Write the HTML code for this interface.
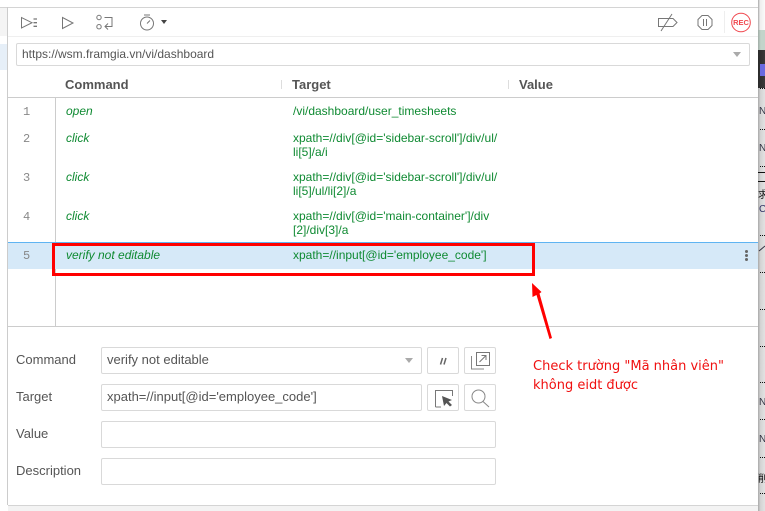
<!DOCTYPE html>
<html><head><meta charset="utf-8"><style>
html,body{margin:0;padding:0;background:#fff}
body{width:765px;height:511px;position:relative;overflow:hidden;font-family:"Liberation Sans",sans-serif}
.a{position:absolute}
.t{position:absolute;white-space:nowrap;font-size:12px;line-height:14px}
.g{color:#0f8a32}
.i{font-style:italic}
.n{color:#888;font-family:"Liberation Mono",monospace;font-size:12px;left:23px}
.h{font-size:13px;font-weight:bold;color:#555;line-height:15px}
.l{font-size:13px;color:#555;left:16px;line-height:15px}
.b{position:absolute;box-sizing:border-box;border:1px solid #d9d9d9;border-radius:2px;background:#fff;font-size:13px;color:#555;line-height:24px;padding-left:5px;white-space:nowrap}
.ln{position:absolute;background:#ccc}
</style></head><body>
<div class="a" style="left:0;top:8px;width:7px;height:28px;background:#f4f4f4"></div>
<div class="a" style="left:0;top:44px;width:7px;height:26px;background:#e6eff8"></div>
<div class="ln" style="left:0;top:7px;width:758px;height:1px;background:#d4d4d4"></div>
<div class="ln" style="left:7px;top:7px;width:1px;height:498px"></div>
<div class="ln" style="left:8px;top:36px;width:750px;height:1px;background:#efefef"></div>

<svg class="a" style="left:8px;top:8px" width="750" height="28" fill="none" stroke="#777" stroke-width="1">
<path d="M13.500 9.500V20L24 14.700Z"/><path d="M25.500 11h3.500M25.500 14.700h3.500M25.500 18.300h3.500" stroke-width="1.300"/>
<path d="M54.500 9.500V20.500L65 15Z"/>
<circle cx="91" cy="9.500" r="2.200"/><circle cx="91" cy="18.700" r="2.200"/><path d="M96.500 9.500H104V18.500H97.500M100 15.500L97 18.500L100 21.500"/>
<circle cx="139" cy="15.500" r="6.500"/><path d="M136 7h6M139 15.500l3-3"/><path d="M153 12h6l-3 4z" fill="#444" stroke="none"/>
<path d="M650.500 10.500H665L669 14.500L665 18.500H650.500Z"/><path d="M653 23L664 6"/>
<path d="M694 7.500H700L704 11.500V17.500L700 21.500H694L690 17.500V11.500Z"/><path d="M695.500 11V18M698.500 11V18"/>
<path d="M716.500 3V25" stroke="#eee"/>
<circle cx="733" cy="14.500" r="9.300" stroke="#f0484f"/>
<text x="733" y="17" text-anchor="middle" font-size="7.500" font-weight="bold" fill="#f0484f" stroke="none" font-family="Liberation Sans">REC</text>
</svg>

<div class="b" style="left:16px;top:43px;width:734px;height:23px;line-height:21px;font-size:12px;color:#555;padding-left:5px">https://wsm.framgia.vn/vi/dashboard</div>
<div class="a" style="left:733px;top:52px;border-left:4.500px solid transparent;border-right:4.500px solid transparent;border-top:5px solid #aaa"></div>

<div class="t h" style="left:65px;top:77px">Command</div>
<div class="t h" style="left:292px;top:77px">Target</div>
<div class="t h" style="left:519px;top:77px">Value</div>
<div class="ln" style="left:281px;top:80px;width:1px;height:9px;background:#ddd"></div>
<div class="ln" style="left:508px;top:80px;width:1px;height:9px;background:#ddd"></div>
<div class="ln" style="left:8px;top:97px;width:750px;height:1px"></div>
<div class="ln" style="left:55px;top:98px;width:1px;height:228px"></div>

<div class="a" style="left:8px;top:242px;width:750px;height:27px;background:#d6e9f8;border-top:1px solid #5fb4f2;box-sizing:border-box"></div>
<div class="ln" style="left:8px;top:326px;width:750px;height:1px"></div>

<div class="t n" style="top:105px">1</div>
<div class="t g i" style="left:66px;top:104px">open</div>
<div class="t g" style="left:293px;top:104px">/vi/dashboard/user_timesheets</div>
<div class="t n" style="top:132px">2</div>
<div class="t g i" style="left:66px;top:131px">click</div>
<div class="t g" style="left:293px;top:131px">xpath=//div[@id='sidebar-scroll']/div/ul/<br>li[5]/a/i</div>
<div class="t n" style="top:171px">3</div>
<div class="t g i" style="left:66px;top:170px">click</div>
<div class="t g" style="left:293px;top:170px">xpath=//div[@id='sidebar-scroll']/div/ul/<br>li[5]/ul/li[2]/a</div>
<div class="t n" style="top:210px">4</div>
<div class="t g i" style="left:66px;top:209px">click</div>
<div class="t g" style="left:293px;top:209px">xpath=//div[@id='main-container']/div<br>[2]/div[3]/a</div>
<div class="t n" style="top:249px">5</div>
<div class="t g i" style="left:66px;top:248px">verify not editable</div>
<div class="t g" style="left:293px;top:248px">xpath=//input[@id='employee_code']</div>
<div class="a" style="left:745px;top:250px;width:3px;height:3px;border-radius:50%;background:#666;box-shadow:0 4px 0 #666,0 8px 0 #666"></div>

<div class="a" style="left:52px;top:243px;width:483px;height:33px;box-sizing:border-box;border:3px solid #f00"></div>
<svg class="a" style="left:525px;top:280px" width="35" height="65" fill="#f00" stroke="none">
<path d="M7 3L7.500 17L11.500 15L24.500 59L27 58L14.500 13.500L16.500 12Z"/>
</svg>
<div class="t" style="left:533px;top:357px;font-family:'DejaVu Sans',sans-serif;font-size:13px;line-height:19px;color:#f01010">Check trường "Mã nhân viên"<br>không eidt được</div>

<div class="t l" style="top:352px">Command</div>
<div class="t l" style="top:389px">Target</div>
<div class="t l" style="top:426px">Value</div>
<div class="t l" style="top:463px">Description</div>
<div class="b" style="left:101px;top:347px;width:321px;height:27px">verify not editable</div>
<div class="a" style="left:405px;top:358px;border-left:4.500px solid transparent;border-right:4.500px solid transparent;border-top:5px solid #aaa"></div>
<div class="b" style="left:101px;top:384px;width:321px;height:27px">xpath=//input[@id='employee_code']</div>
<div class="b" style="left:101px;top:421px;width:395px;height:27px"></div>
<div class="b" style="left:101px;top:458px;width:395px;height:27px"></div>
<div class="b" style="left:427px;top:347px;width:32px;height:27px"></div>
<div class="b" style="left:464px;top:347px;width:32px;height:27px"></div>
<div class="b" style="left:427px;top:384px;width:32px;height:27px"></div>
<div class="b" style="left:464px;top:384px;width:32px;height:27px"></div>
<svg class="a" style="left:427px;top:347px" width="69" height="65" fill="none" stroke="#666">
<path d="M13.500 17.500L15.500 11M17 17.500L19 11" stroke-width="1.500"/>
<rect x="49.500" y="5.500" width="13" height="13" stroke="#777"/><path d="M44.500 9V22H57" stroke="#888"/><path d="M52.500 15L59 8.500M54.500 8.500h4.500v4.500" stroke="#777"/>
<path d="M8.500 60V43.500H25.500V49M8.500 60H14" stroke="#777"/>
<path d="M15 49L25 53L21.500 54.500L25 58L23 59.500L19.500 56L17 59Z" fill="#555" stroke="none"/>
<circle cx="51.500" cy="49.500" r="6.500" stroke="#888"/><path d="M56 54.500L62 60" stroke="#888"/>
</svg>
<div class="a" style="left:8px;top:505px;width:750px;height:6px;background:#f3f3f3;border-top:1px solid #d4d4d4;box-sizing:border-box"></div>

<div class="a" style="left:758px;top:0;width:7px;height:511px;overflow:hidden;background:linear-gradient(90deg,#a8a8a8 0,#d4d4d4 35%,#e2e2e2 100%);font:10px 'Liberation Sans','Noto Sans CJK SC',sans-serif;color:#223">
<div class="a" style="left:0;top:0;width:7px;height:30px;background:linear-gradient(90deg,#a8a8a8 0,#eee 30%,#fafafa 100%)"></div>
<div class="a" style="left:0;top:30px;width:7px;height:20px;background:linear-gradient(90deg,#a0aca6 0,#c2d4ca 40%)"></div>
<div class="a" style="left:0;top:50px;width:7px;height:38px;background:linear-gradient(90deg,#2a2a2a 0,#3a3a3a 100%)"></div>
<div class="a" style="left:2px;top:64px;width:5px;height:12px;background:#6a6ae0"></div>
<svg class="a" style="left:0;top:0" width="7" height="511" stroke="#111" stroke-dasharray="1 1" fill="none">
<path d="M2 88.500h5M2 129.500h5M2 166.500h5M2 235.500h5M2 272.500h5M2 309.500h5M2 346.500h5M2 382.500h5M2 419.500h5M2 457.500h5M2 493.500h5"/>
</svg>
<div class="a" style="left:1px;top:106px;color:#334">N</div>
<div class="a" style="left:1px;top:143px;color:#334">N</div>
<div class="a" style="left:0;top:172px;width:7px;height:1px;background:#111"></div>
<div class="a" style="left:0;top:181px;width:7px;height:1px;background:#111"></div>
<div class="a" style="left:0;top:186px;color:#111">求</div>
<div class="a" style="left:1px;top:204px;color:#336">C</div>
<svg class="a" style="left:0;top:240px" width="7" height="14" fill="none" stroke="#334"><path d="M1 11L7 6"/></svg>
<div class="a" style="left:1px;top:397px;color:#334">N</div>
<div class="a" style="left:1px;top:434px;color:#334">N</div>
<div class="a" style="left:0;top:470px;color:#111">削</div>
</div>
</body></html>
